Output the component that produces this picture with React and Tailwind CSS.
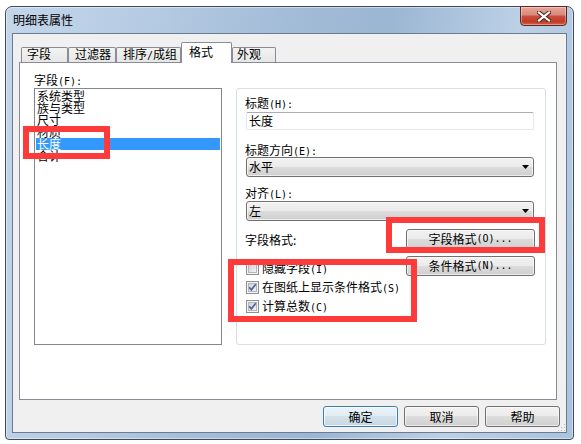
import React from "react";

function L({ children }) {
  return <span className="font-['DejaVu_Sans_Mono',monospace] text-[10px]">{children}</span>;
}

function CheckBox({ checked }) {
  return (
    <svg width="13" height="13" viewBox="0 0 13 13" className="shrink-0">
      <defs>
        <linearGradient id={checked ? "cbg1" : "cbg0"} x1="0" y1="0" x2="1" y2="1">
          <stop offset="0" stopColor="#cbcfd5" />
          <stop offset="1" stopColor="#f6f6f6" />
        </linearGradient>
      </defs>
      <rect x="0.5" y="0.5" width="12" height="12" fill="#f4f4f4" stroke="#8e8f8f" />
      <rect x="2.5" y="2.5" width="8" height="8" fill={checked ? "url(#cbg1)" : "url(#cbg0)"} stroke="#b4b8bd" />
      {checked && (
        <path d="M3.2 6.3 L5.4 8.8 L9.8 3.2" fill="none" stroke="#4c62a0" strokeWidth="1.7" />
      )}
    </svg>
  );
}

function Arrow() {
  return (
    <svg width="7" height="4" viewBox="0 0 7 4" className="shrink-0">
      <path d="M0 0 H7 L3.5 4 Z" fill="#000" />
    </svg>
  );
}

function Combo({ value }) {
  return (
    <div className="ml-px h-[20px] w-[288px] rounded-[3px] border border-[#707070] bg-[linear-gradient(#f2f2f2_0%,#ebebeb_50%,#dddddd_50%,#cfcfcf_100%)] shadow-[inset_0_0_0_1px_rgba(255,255,255,0.6)] flex items-center justify-between pl-[2px] pr-[4px]">
      <span>{value}</span>
      <Arrow />
    </div>
  );
}

function Btn({ children, w, def }) {
  return (
    <div
      className={
        def
          ? "h-[21px] w-[75px] rounded-[3px] border border-[#3c7fb1] bg-[linear-gradient(#eaf3f9_0%,#e2ecf3_50%,#d3e1ea_50%,#c8d8e4_100%)] shadow-[inset_0_0_0_1px_rgba(255,255,255,0.7)] flex items-center justify-center"
          : "h-[21px] w-[75px] rounded-[3px] border border-[#707070] bg-[linear-gradient(#f2f2f2_0%,#ebebeb_50%,#dddddd_50%,#cfcfcf_100%)] shadow-[inset_0_0_0_1px_rgba(255,255,255,0.6)] flex items-center justify-center"
      }
    >
      {children}
    </div>
  );
}

function SmallBtn({ children, className }) {
  return (
    <div
      className={
        "h-[20px] w-[129px] rounded-[3px] border border-[#707070] bg-[linear-gradient(#f2f2f2_0%,#ebebeb_50%,#dddddd_50%,#cfcfcf_100%)] shadow-[inset_0_0_0_1px_rgba(255,255,255,0.6)] flex items-center justify-center " +
        (className || "")
      }
    >
      {children}
    </div>
  );
}

export default function App() {
  const items = ["系统类型", "族与类型", "尺寸", "材质", "长度", "合计"];
  return (
    <div className="relative w-[581px] h-[444px] overflow-hidden bg-white pl-[5px] pt-[6px] text-[12px] leading-[12px] text-black font-['Noto_Sans_CJK_SC',sans-serif]">
      {/* window */}
      <div className="w-[569px] h-[434px] rounded-t-[7px] rounded-b-[4px] border border-[#3f4b5a] bg-[linear-gradient(100deg,#c3d6ea_0%,#b6cbe3_22%,#a2bbd7_45%,#9bb6d3_60%,#bcd0e6_80%,#aac2dd_100%)] shadow-[inset_0_0_0_1px_rgba(255,255,255,0.45)] flex flex-col">
        {/* title bar */}
        <div className="h-[26px] flex justify-between pl-[7px] pr-[6px]">
          <div className="self-center text-[12px]">明细表属性</div>
          <div className="-mt-px h-[20px] w-[47px] rounded-b-[4px] border border-[#5a2a22] bg-[linear-gradient(#e7a696_0%,#d9877a_45%,#c7503f_50%,#c23a27_80%,#d1624c_100%)] shadow-[inset_0_0_0_1px_rgba(255,255,255,0.35)] flex items-center justify-center">
            <svg width="14" height="11" viewBox="0 0 14 11">
              <path d="M2 1.5 L12 9.5 M12 1.5 L2 9.5" stroke="#4a2620" strokeWidth="4.2" strokeLinecap="square" />
              <path d="M2 1.5 L12 9.5 M12 1.5 L2 9.5" stroke="#ffffff" strokeWidth="2.2" strokeLinecap="square" />
            </svg>
          </div>
        </div>
        {/* client */}
        <div className="relative mx-[6px] h-[400px] border border-[#6c7c90] bg-[#f0f0f0] flex flex-col">
          {/* tabs */}
          <div className="relative z-10 -mb-px mt-[8px] h-[21px] flex items-end pl-[8px]">
            <div className="mb-px h-[15px] w-[47px] border border-b-0 border-[#898c95] rounded-t-[2px] bg-[linear-gradient(#f3f3f3,#e6e6e6)] pl-[5px]">字段</div>
            <div className="mb-px h-[15px] w-[48px] border border-b-0 border-[#898c95] rounded-t-[2px] bg-[linear-gradient(#f3f3f3,#e6e6e6)] pl-[6px]">过滤器</div>
            <div className="mb-px h-[15px] w-[65px] border border-b-0 border-[#898c95] rounded-t-[2px] bg-[linear-gradient(#f3f3f3,#e6e6e6)] pl-[6px]">排序<L>/</L>成组</div>
            <div className="h-[21px] w-[51px] border border-b-0 border-[#898c95] rounded-t-[2px] bg-white pl-[7px] pt-[3px]">格式</div>
            <div className="mb-px h-[15px] w-[44px] border border-b-0 border-[#898c95] rounded-t-[2px] bg-[linear-gradient(#f3f3f3,#e6e6e6)] pl-[4px]">外观</div>
          </div>
          {/* panel */}
          <div className="ml-[6px] h-[338px] w-[538px] border border-[#898c95] bg-white flex pl-[14px]">
            {/* left column */}
            <div className="w-[188px] pt-[11px] flex flex-col">
              <div className="h-[12px] whitespace-nowrap">字段<L>(F):</L></div>
              <div className="mt-[2px] h-[257px] border border-[#828790] bg-white p-px">
                {items.map((t) => (
                  <div
                    key={t}
                    className={
                      t === "长度"
                        ? "h-[12px] pl-px bg-[#3399ff] text-white whitespace-nowrap"
                        : "h-[12px] pl-px whitespace-nowrap"
                    }
                  >
                    {t}
                  </div>
                ))}
              </div>
            </div>
            {/* group box */}
            <div className="ml-[14px] mt-[25px] h-[257px] w-[310px] rounded-[3px] border border-[#d5dfe5] pl-[8px] pr-[11px] flex flex-col">
              <div className="mt-[8px] h-[12px] whitespace-nowrap">标题<L>(H):</L></div>
              <div className="ml-px mt-[3px] h-[18px] w-[288px] rounded-[2px] border border-[#e3e9ef] border-t-[#abadb3] bg-white pl-[2px] flex items-center">长度</div>
              <div className="mt-[14px] h-[12px] whitespace-nowrap">标题方向<L>(E):</L></div>
              <div className="mt-px">
                <Combo value="水平" />
              </div>
              <div className="mt-[10px] h-[12px] whitespace-nowrap">对齐<L>(L):</L></div>
              <div className="mt-[2px]">
                <Combo value="左" />
              </div>
              <div className="mt-[8px] flex justify-between">
                <div className="flex flex-col">
                  <div className="mt-[5px] h-[12px] whitespace-nowrap">字段格式:</div>
                  <div className="mt-[13px] flex flex-col">
                    <div className="h-[19px] ml-px flex items-center gap-[3px] whitespace-nowrap">
                      <CheckBox checked={false} />
                      <span>隐藏字段<L>(I)</L></span>
                    </div>
                    <div className="h-[19px] ml-px flex items-center gap-[3px] whitespace-nowrap">
                      <CheckBox checked />
                      <span>在图纸上显示条件格式<L>(S)</L></span>
                    </div>
                    <div className="h-[19px] ml-px flex items-center gap-[3px] whitespace-nowrap">
                      <CheckBox checked />
                      <span>计算总数<L>(C)</L></span>
                    </div>
                  </div>
                </div>
                <div className="mr-[-1px] flex flex-col">
                  <SmallBtn>字段格式<L>(O)...</L></SmallBtn>
                  <SmallBtn className="mt-[7px]">条件格式<L>(N)...</L></SmallBtn>
                </div>
              </div>
            </div>
          </div>
          {/* bottom buttons */}
          <div className="mt-[6px] flex justify-end gap-[6px] pr-[6px]">
            <Btn def>确定</Btn>
            <Btn>取消</Btn>
            <Btn>帮助</Btn>
          </div>
          {/* size grip */}
          <svg className="absolute right-0 bottom-0" width="8" height="8" viewBox="0 0 8 8">
            <rect x="6" y="0" width="1" height="1" fill="#b8b8b8" />
            <rect x="3" y="3" width="1" height="1" fill="#b8b8b8" />
            <rect x="6" y="3" width="1" height="1" fill="#b8b8b8" />
            <rect x="0" y="6" width="1" height="1" fill="#b8b8b8" />
            <rect x="3" y="6" width="1" height="1" fill="#b8b8b8" />
            <rect x="6" y="6" width="1" height="1" fill="#b8b8b8" />
          </svg>
        </div>
      </div>
      {/* red annotation boxes */}
      <div className="absolute left-[23px] top-[126px] h-[33px] w-[87px] border-[6px] border-[#fd3b3b]" />
      <div className="absolute left-[386px] top-[217px] h-[36px] w-[159px] border-[6px] border-[#fd3b3b]" />
      <div className="absolute left-[228px] top-[259px] h-[63px] w-[189px] border-[6px] border-[#fd3b3b]" />
    </div>
  );
}
